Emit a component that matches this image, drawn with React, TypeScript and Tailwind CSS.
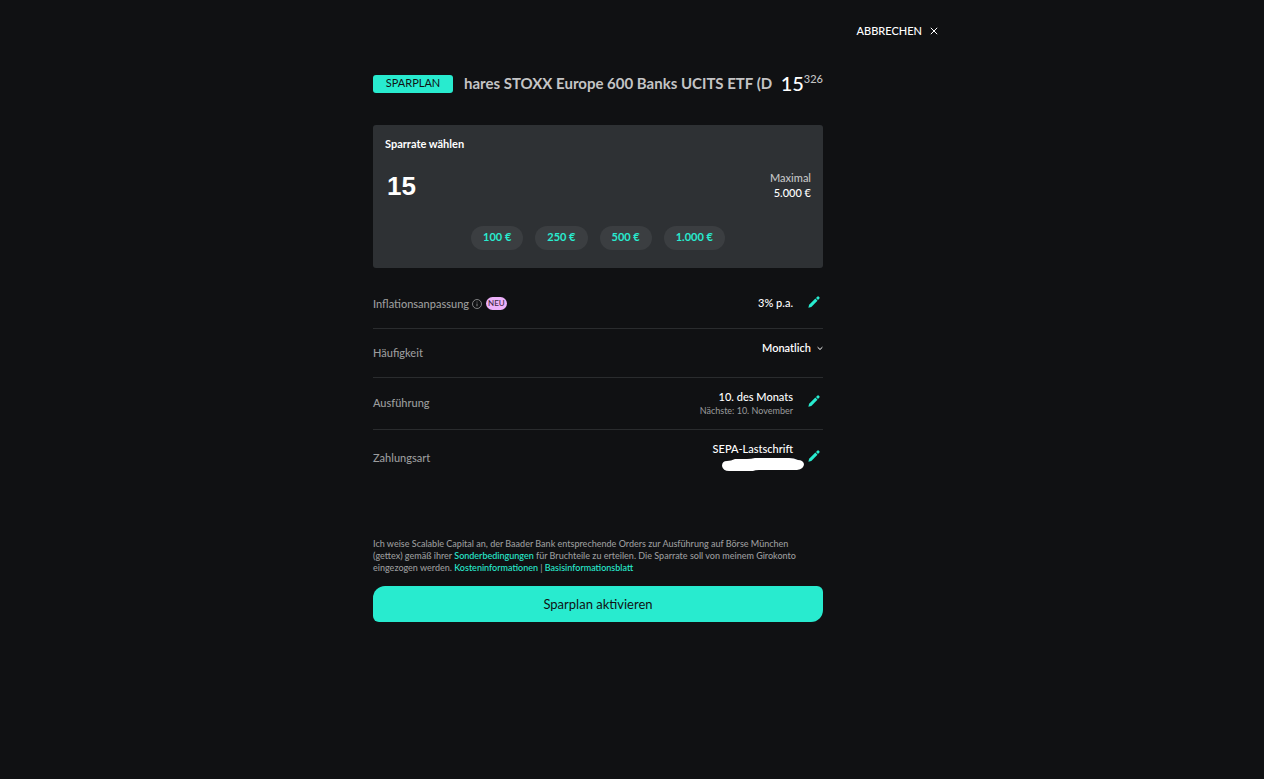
import { useState, type ReactNode } from 'react';

const presets = [
  { value: '100', label: '100 €' },
  { value: '250', label: '250 €' },
  { value: '500', label: '500 €' },
  { value: '1000', label: '1.000 €' },
];

function PencilIcon() {
  return (
    <svg className="h-3 w-3" viewBox="0 0 12 12" fill="currentColor" aria-hidden="true">
      <path d="M0.4 11.7 1.1 8.7 7.4 2.6 9.5 4.7 3.3 10.9Z" />
      <path d="M8 2 9.5 0.6Q10.2 0 10.9 0.7L11.4 1.2Q12 1.9 11.4 2.6L10 4.1Z" />
    </svg>
  );
}

function EditButton({ label }: { label: string }) {
  return (
    <button type="button" aria-label={label} className="mr-[3px] ml-[15px] self-center pb-1 text-[#28ebcf]">
      <PencilIcon />
    </button>
  );
}

function Row({ label, className, children }: { label: ReactNode; className: string; children: ReactNode }) {
  return (
    <div className={`flex justify-between border-[#2a2c2e] ${className}`}>
      <div className="flex items-center text-[#9b9c9d]">{label}</div>
      <div className="flex items-start">{children}</div>
    </div>
  );
}

export default function App() {
  const [rate, setRate] = useState('15');

  return (
    <div className="min-h-screen bg-[#101113] pr-[68px] font-['Lato','Noto_Sans',sans-serif] text-[11px] leading-4 font-medium text-white">
      <header className="mx-auto flex max-w-[680px] justify-end pt-[23px]">
        <button type="button" className="flex items-center gap-2">
          ABBRECHEN
          <svg className="h-2 w-2" viewBox="0 0 8 8" fill="none" stroke="currentColor" aria-hidden="true">
            <path d="M0.8 0.8 7.2 7.2M7.2 0.8 0.8 7.2" />
          </svg>
        </button>
      </header>

      <main className="mx-auto max-w-[450px] pt-8">
        <div className="flex h-6 items-center">
          <span className="mt-[2px] mr-[11px] h-[18px] w-20 shrink-0 rounded-[3px] bg-[#28ebcf] text-center font-normal text-[#101113]">
            SPARPLAN
          </span>
          <h1 className="min-w-0 flex-1 overflow-hidden text-[15px] leading-5 font-bold whitespace-nowrap text-[#c4c4c5]">
            hares STOXX Europe 600 Banks UCITS ETF (D
          </h1>
          <div className="flex items-start">
            <span className="text-xl leading-6 font-medium">15</span>
            <span className="leading-4 text-[#c4c4c5]">326</span>
          </div>
        </div>

        <section className="mt-[30px] rounded-[3px] bg-[#2e3134] px-3 pt-[11px] pb-[18px]">
          <label htmlFor="rate" className="block font-bold">
            Sparrate wählen
          </label>
          <div className="mt-4 flex items-center justify-between">
            <input
              id="rate"
              inputMode="numeric"
              value={rate}
              onChange={(e) => setRate(e.target.value)}
              className="h-9 w-40 bg-transparent px-[2px] font-['Liberation_Sans',sans-serif] text-[26px] font-bold outline-none"
            />
            <div className="pb-[2px] text-right leading-[15px]">
              <div className="text-[#c4c4c5]">Maximal</div>
              <div>5.000 €</div>
            </div>
          </div>
          <div className="mt-[22px] flex justify-center gap-3">
            {presets.map((p) => (
              <button
                key={p.value}
                type="button"
                onClick={() => setRate(p.value)}
                className="h-6 rounded-full bg-[#3b3e41] px-3 pb-[2px] font-bold text-[#28ebcf]"
              >
                {p.label}
              </button>
            ))}
          </div>
        </section>

        <section className="mt-3">
          <Row
            className="h-[49px] border-b pt-[15px] pb-4"
            label={
              <>
                Inflationsanpassung
                <svg className="ml-[3px] h-[10px] w-[10px]" viewBox="0 0 10 10" fill="none" stroke="currentColor" strokeWidth="0.8" aria-hidden="true">
                  <circle cx="5" cy="5" r="4.5" />
                  <path d="M5 4.5V7.3M5 2.6V3.5" />
                </svg>
                <span className="ml-1 rounded-full bg-[#edb1fa] px-[2px] text-[8px] leading-[13px] text-[#3d2b42]">NEU</span>
              </>
            }
          >
            <span>3% p.a.</span>
            <EditButton label="Inflationsanpassung bearbeiten" />
          </Row>

          <Row className="h-[49px] border-b pt-[11px] pb-3" label={<label htmlFor="interval">Häufigkeit</label>}>
            <div className="flex items-center">
              <select id="interval" className="h-4 appearance-none bg-transparent font-semibold outline-none" defaultValue="m">
                <option value="m">Monatlich</option>
              </select>
              <svg className="ml-[6px] h-[6px] w-[6px]" viewBox="0 0 6 6" fill="none" stroke="currentColor" aria-hidden="true">
                <path d="M0.6 2.2 3 4.5 5.4 2.2" />
              </svg>
            </div>
          </Row>

          <Row className="h-[52px] border-b pt-[11px] pb-3" label="Ausführung">
            <div className="text-right">
              <div>10. des Monats</div>
              <div className="text-[9px] leading-3 font-normal text-[#9b9c9d]">Nächste: 10. November</div>
            </div>
            <EditButton label="Ausführung bearbeiten" />
          </Row>

          <Row className="h-14 pt-[11px] pb-3" label="Zahlungsart">
            <div className="relative">
              SEPA-Lastschrift
              <svg className="absolute top-4 -right-3 h-4 w-[84px]" viewBox="0 0 84 16" fill="#fff" aria-hidden="true">
                <path d="M6 4Q1 4 1 9Q2 14 8 14L32 14Q34 13 38 13L76 13Q83 12 83 7Q82 3 77 3Q73 1 68 1L34 1Q30 2 26 2L14 2Q10 4 6 4Z" />
              </svg>
            </div>
            <EditButton label="Zahlungsart bearbeiten" />
          </Row>
        </section>

        <p className="mt-[52px] pr-4 text-[9px] leading-3 text-[#9b9c9d]">
          Ich weise Scalable Capital an, der Baader Bank entsprechende Orders zur Ausführung auf Börse München (gettex) gemäß ihrer{' '}
          <a href="#" className="text-[#28ebcf]">Sonderbedingungen</a> für Bruchteile zu erteilen. Die Sparrate soll von meinem Girokonto
          eingezogen werden. <a href="#" className="text-[#28ebcf]">Kosteninformationen</a> |{' '}
          <a href="#" className="text-[#28ebcf]">Basisinformationsblatt</a>
        </p>
        <button
          type="button"
          className="mt-3 h-9 w-full rounded-tl-xl rounded-tr-md rounded-br-xl rounded-bl-md bg-[#28ebcf] text-[13px] font-normal text-[#101113]"
        >
          Sparplan aktivieren
        </button>
      </main>
    </div>
  );
}
